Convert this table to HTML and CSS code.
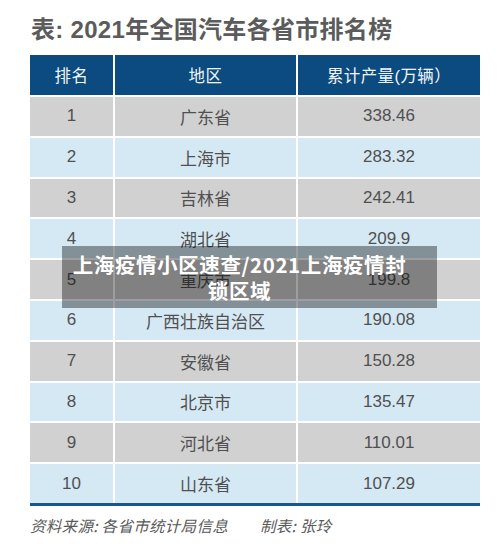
FILE: index.html
```html
<!DOCTYPE html>
<html lang="zh">
<head>
<meta charset="utf-8">
<link rel="stylesheet" href="styles.css">
</head>
<body>
<div class="page">
  <h1 class="title">表: 2021年全国汽车各省市排名榜</h1>
  <div class="table">
    <div class="cell head">排名</div><div class="cell head">地区</div><div class="cell head">累计产量(万辆）</div>
    <div class="cell g">1</div><div class="cell g">广东省</div><div class="cell g">338.46</div>
    <div class="cell b">2</div><div class="cell b">上海市</div><div class="cell b">283.32</div>
    <div class="cell g">3</div><div class="cell g">吉林省</div><div class="cell g">242.41</div>
    <div class="cell b">4</div><div class="cell b">湖北省</div><div class="cell b">209.9</div>
    <div class="cell g">5</div><div class="cell g">重庆市</div><div class="cell g">199.8</div>
    <div class="cell b">6</div><div class="cell b">广西壮族自治区</div><div class="cell b">190.08</div>
    <div class="cell g">7</div><div class="cell g">安徽省</div><div class="cell g">150.28</div>
    <div class="cell b">8</div><div class="cell b">北京市</div><div class="cell b">135.47</div>
    <div class="cell g">9</div><div class="cell g">河北省</div><div class="cell g">110.01</div>
    <div class="cell b">10</div><div class="cell b">山东省</div><div class="cell b">107.29</div>
  </div>
  <div class="rule"></div>
  <p class="note"><span>资料来源: 各省市统计局信息</span><span>制表: 张玲</span></p>
  <div class="overlay">上海疫情小区速查/2021上海疫情封锁区域</div>
</div>
</body>
</html>
```
FILE: styles.css
```css
html, body {
  margin: 0;
  padding: 0;
  background: #ffffff;
}
.page {
  position: relative;
  width: 500px;
  height: 556px;
  padding: 15px 20px 0 30px;
  box-sizing: border-box;
  font-family: "Liberation Sans", "Noto Sans CJK SC", sans-serif;
  color: #555555;
}
.title {
  margin: 0 0 0 1px;
  height: 40px;
  font-family: "Liberation Sans", "Noto Sans CJK SC", sans-serif;
  font-weight: 700;
  font-size: 24px;
  line-height: 30px;
  color: #5b5b5b;
  letter-spacing: 0.3px;
}
.table {
  display: grid;
  grid-template-columns: 83px 181px 182px;
  grid-template-rows: 40px repeat(10, 38.8px);
  gap: 2px;
  width: 450px;
}
.cell {
  display: flex;
  align-items: center;
  justify-content: center;
  font-size: 17px;
  color: #505050;
  font-family: "Liberation Sans", "Noto Sans CJK SC", sans-serif;
}
.head {
  background: #0c4b80;
  color: #f2f5f8;
  font-size: 16.5px;
  letter-spacing: 0.4px;
}
.g { background: #d1d1d2; }
.b { background: #d5e9f5; }
.rule {
  width: 450px;
  height: 3px;
  background: #1a568b;
}
.note {
  margin: 8px 0 0 0;
  font-size: 15.5px;
  font-style: italic;
  color: #5a5a5a;
  font-family: "Noto Sans CJK SC", sans-serif;
  display: flex;
  gap: 32px;
  line-height: 22px;
  letter-spacing: 0.3px;
}
.overlay {
  position: absolute;
  left: 62px;
  top: 246px;
  width: 375px;
  height: 62px;
  box-sizing: border-box;
  padding: 5px 28px 0 8px;
  background: rgba(0, 0, 0, 0.38);
  color: #ffffff;
  font-family: "Noto Sans CJK SC", sans-serif;
  font-weight: 700;
  font-size: 20.5px;
  line-height: 26px;
  letter-spacing: 0.6px;
  text-align: center;
}
```
